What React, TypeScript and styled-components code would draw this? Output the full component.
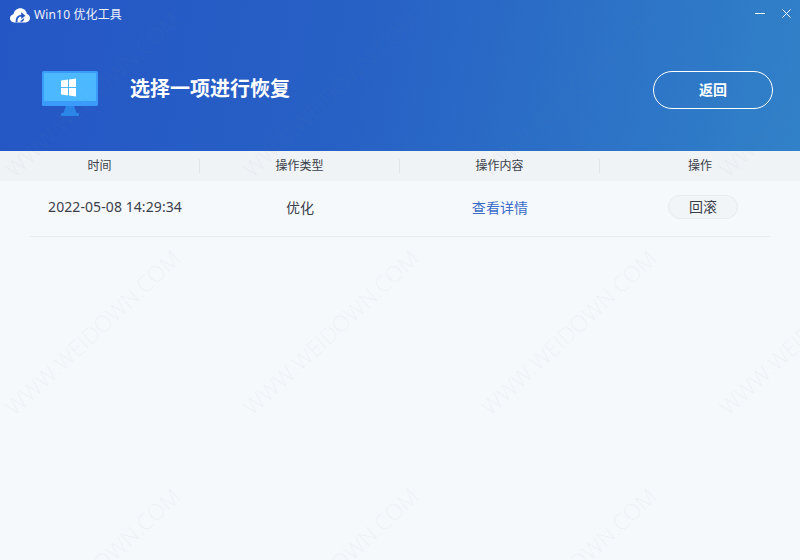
import React from 'react';
import styled, { createGlobalStyle } from 'styled-components';

const GlobalStyle = createGlobalStyle`
  html, body {
    margin: 0;
    padding: 0;
    height: 100%;
    overflow: hidden;
  }
  body {
    font-family: "Noto Sans", "Noto Sans CJK SC", sans-serif;
  }
  * {
    box-sizing: border-box;
  }
`;

const Window = styled.div`
  position: relative;
  width: 800px;
  height: 560px;
  overflow: hidden;
  background: #f6f9fc;
  display: flex;
  flex-direction: column;
`;

const Banner = styled.header`
  height: 151px;
  background: linear-gradient(100deg, #2556c5 0%, #2761c5 45%, #3181c8 100%);
  color: #ffffff;
  display: flex;
  flex-direction: column;
`;

const TitleBar = styled.div`
  height: 30px;
  padding: 0 9px 0 10px;
  display: flex;
  align-items: center;
`;

const AppName = styled.span`
  margin-left: 4px;
  font-size: 12px;
  letter-spacing: 0.15px;
  line-height: 30px;
  color: #eef3fc;
`;

const WindowControls = styled.div`
  margin: 0 0 3px auto;
  display: flex;
  align-items: center;
  gap: 17px;
  height: 27px;
`;

const Hero = styled.div`
  flex-grow: 1;
  padding: 41px 27px 0 42px;
  display: flex;
  align-items: flex-start;
`;

const HeroTitle = styled.h1`
  margin: 0 0 0 32px;
  font-size: 20px;
  font-weight: 700;
  line-height: 36px;
`;

const BackButton = styled.button`
  margin-left: auto;
  width: 120px;
  height: 38px;
  border: 1px solid #ffffff;
  border-radius: 19px;
  background: none;
  color: #ffffff;
  font-family: inherit;
  font-size: 14px;
  font-weight: 700;
  padding: 0 0 2px;
`;

const HeadRow = styled.div`
  height: 30px;
  background: #f0f3f6;
  display: grid;
  grid-template-columns: repeat(4, 200px);
  align-items: center;
`;

const HeadCell = styled.div<{ $divider?: boolean }>`
  height: 14px;
  line-height: 14px;
  font-size: 12px;
  color: #3a3f4a;
  text-align: center;
  border-right: ${(p) => (p.$divider ? '1px solid #e2e6ea' : 'none')};
`;

const DataRow = styled.div`
  height: 56px;
  margin: 0 30px;
  padding-bottom: 4px;
  border-bottom: 1px solid #e8ecef;
  display: grid;
  grid-template-columns: 170px 200px 200px 170px;
  align-items: center;
`;

const DataCell = styled.div<{ $link?: boolean }>`
  font-size: 14px;
  letter-spacing: 0.08px;
  text-align: center;
  color: ${(p) => (p.$link ? '#3a6cc8' : '#3a3f4a')};
`;

const ActionCell = styled.div`
  padding-left: 68px;
`;

const RollbackButton = styled.button`
  display: block;
  width: 70px;
  height: 24px;
  border: 1px solid #e8ecef;
  border-radius: 12px;
  background: #f2f5f8;
  color: #3a3f4a;
  font-family: inherit;
  font-size: 14px;
  line-height: 20px;
  padding: 0;
`;

const WatermarkLayer = styled.div`
  position: absolute;
  left: -26px;
  top: -25px;
  display: grid;
  grid-template-columns: repeat(4, 238px);
  grid-auto-rows: 238px;
  pointer-events: none;
`;

const WatermarkTile = styled.div`
  display: flex;
  align-items: center;
  justify-content: center;
  font-family: "Open Sans", sans-serif;
  font-weight: 300;
  font-size: 22.5px;
  white-space: nowrap;
  color: rgba(120, 140, 160, 0.08);
  > span {
    transform: rotate(-43deg);
  }
`;

function CloudLogo() {
  return (
    <svg width="20" height="15" viewBox="0 0 20 15">
      <path
        fill="#ffffff"
        d="M4.2 14.5C1.9 14.5 0 12.6 0 10.3 0 8.2 1.5 6.5 3.5 6.2 4 2.8 7 .3 10.4.3c3.3 0 6 2.4 6.5 5.6 1.8.5 3.1 2.2 3.1 4.2 0 2.4-2 4.4-4.4 4.4z"
      />
      <path fill="none" stroke="#2556c5" strokeWidth="1.9" d="M6.6 14.2C5.8 10.2 8.4 7.4 12.2 7.6" />
      <path fill="#2556c5" d="M11.2 4.2l4.2 3.5-4.2 3.3z" />
      <path fill="none" stroke="#2556c5" strokeWidth="1.4" d="M13.6 10.6c-.3 1.6-1.4 2.5-3 2.6" />
    </svg>
  );
}

function MinimizeIcon() {
  return (
    <svg width="10" height="9" viewBox="0 0 10 9">
      <path stroke="#ffffff" strokeWidth="1" d="M0 4.5h10" />
    </svg>
  );
}

function CloseIcon() {
  return (
    <svg width="9" height="9" viewBox="0 0 9 9">
      <path stroke="#ffffff" strokeWidth="1" fill="none" d="M.5.5l8 8M8.5.5l-8 8" />
    </svg>
  );
}

function MonitorIcon() {
  return (
    <svg width="56" height="45" viewBox="0 0 56 45">
      <path fill="#2a86e8" d="M24 35h8l3 8H21z" />
      <rect x="19" y="42" width="18" height="3" rx="1" fill="#2a86e8" />
      <rect width="56" height="35" rx="1.5" fill="#3a9bfb" />
      <rect x="2" y="2" width="52" height="28" fill="#4cb8ff" />
      <path
        fill="#ffffff"
        d="M19 9.6l7-1v7.5h-7zM27 8.4L34 7.4v8.7h-7zM19 17h7v7.6l-7-1zM27 17h7v8.6l-7-1z"
      />
    </svg>
  );
}

function App() {
  const tiles = Array.from({ length: 12 }, (_, i) => i);
  return (
    <Window>
      <GlobalStyle />
      <Banner>
        <TitleBar>
          <CloudLogo />
          <AppName>Win10 优化工具</AppName>
          <WindowControls>
            <MinimizeIcon />
            <CloseIcon />
          </WindowControls>
        </TitleBar>
        <Hero>
          <MonitorIcon />
          <HeroTitle>选择一项进行恢复</HeroTitle>
          <BackButton>返回</BackButton>
        </Hero>
      </Banner>
      <HeadRow>
        <HeadCell $divider>时间</HeadCell>
        <HeadCell $divider>操作类型</HeadCell>
        <HeadCell $divider>操作内容</HeadCell>
        <HeadCell>操作</HeadCell>
      </HeadRow>
      <DataRow>
        <DataCell>2022-05-08 14:29:34</DataCell>
        <DataCell>优化</DataCell>
        <DataCell $link>查看详情</DataCell>
        <ActionCell>
          <RollbackButton>回滚</RollbackButton>
        </ActionCell>
      </DataRow>
      <WatermarkLayer>
        {tiles.map((i) => (
          <WatermarkTile key={i}>
            <span>WWW.WEIDOWN.COM</span>
          </WatermarkTile>
        ))}
      </WatermarkLayer>
    </Window>
  );
}

export default App;
